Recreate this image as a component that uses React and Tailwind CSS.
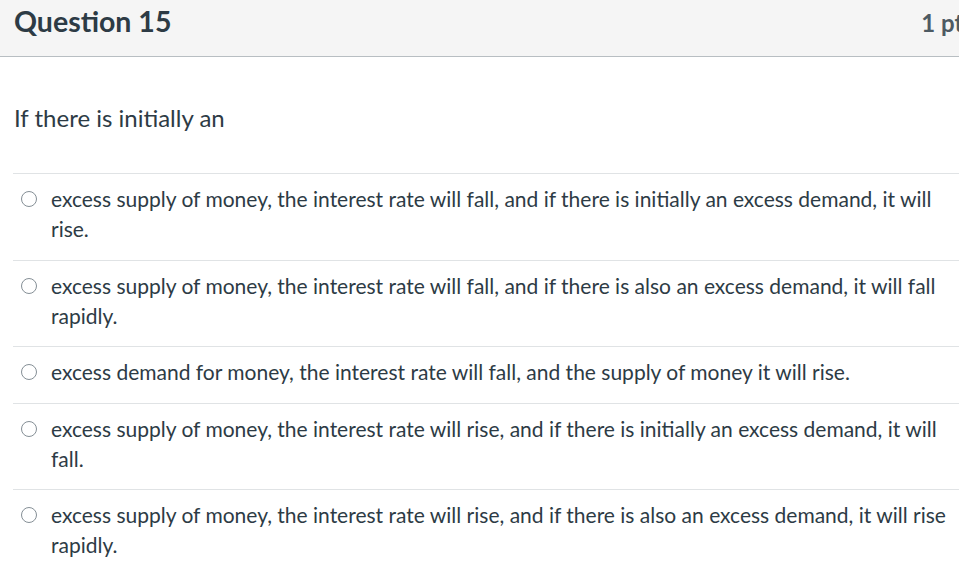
const answers = [
  "excess supply of money, the interest rate will fall, and if there is initially an excess demand, it will rise.",
  "excess supply of money, the interest rate will fall, and if there is also an excess demand, it will fall rapidly.",
  "excess demand for money, the interest rate will fall, and the supply of money it will rise.",
  "excess supply of money, the interest rate will rise, and if there is initially an excess demand, it will fall.",
  "excess supply of money, the interest rate will rise, and if there is also an excess demand, it will rise rapidly.",
];

export default function App() {
  return (
    <div className="h-[588px] w-[959px] overflow-hidden bg-white font-['Lato',sans-serif] text-[#2d3b45]">
      <div className="w-[990px]">
        <div className="flex h-[57px] items-start justify-between border-b border-[#b8bec2] bg-[#f5f5f5] pl-[14px] pr-[16px] pt-[6px]">
          <h2 className="text-[28.5px] font-bold leading-[30px]">Question 15</h2>
          <span className="pt-[2px] text-[24px] font-bold leading-[30px] text-[#4d5a63]">1 pts</span>
        </div>
        <div className="px-[14px] pt-[46px]">
          <p className="text-[24px] leading-[30px]">If there is initially an</p>
        </div>
        <div className="ml-[13px] mt-[40px] w-[946px]">
          {answers.map((text, i) => (
            <label key={i} className="flex items-start border-t border-[#e0e3e5] pb-[15.5px] pt-[10px]">
              <span className="ml-[8px] mt-[7px] h-[16px] w-[16px] shrink-0 rounded-full border-[1.5px] border-[#858f96] bg-white" />
              <span className="ml-[14px] pr-[4px] text-[21px] leading-[30px]">{text}</span>
            </label>
          ))}
        </div>
      </div>
    </div>
  );
}
